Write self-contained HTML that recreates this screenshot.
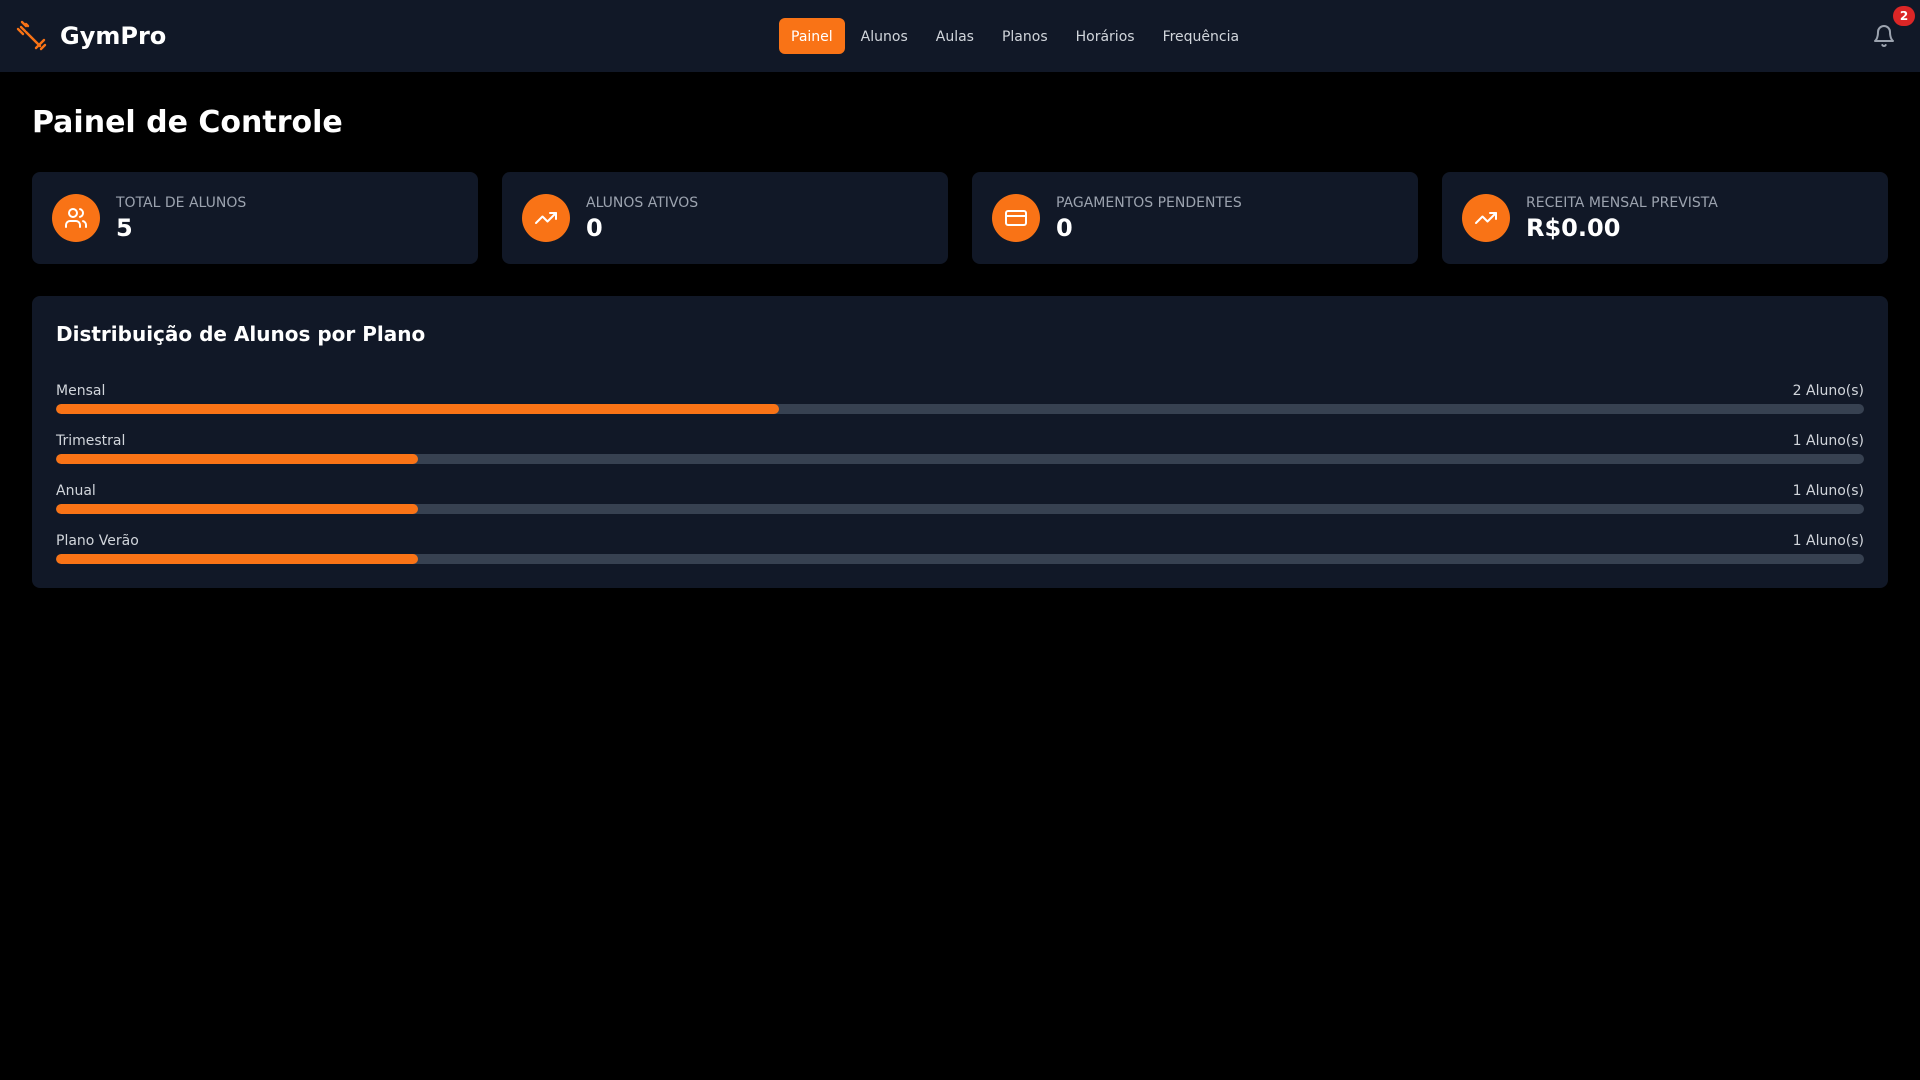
<!DOCTYPE html>
<html><head><meta charset="utf-8"><style>
*{margin:0;padding:0;box-sizing:border-box}
body{width:1920px;height:1080px;background:#000;font-family:"DejaVu Sans","Liberation Sans",sans-serif;color:#fff;position:relative;overflow:hidden}
.hdr{position:absolute;left:0;top:0;width:1920px;height:72px;background:#111827}
.logo{position:absolute;left:60px;top:18px;font-size:24px;font-weight:bold;line-height:36px}
.nav{position:absolute;left:779px;top:18px;display:flex;gap:4px}
.nav a{display:block;height:36px;line-height:38px;padding:0 12px;font-size:14px;color:#d1d5db;border-radius:6px}
.nav a.on{background:#f97316;color:#fff}
h1{position:absolute;left:32px;top:105px;font-size:30px;line-height:36px;font-weight:bold}
.cards{position:absolute;left:32px;top:172px;display:flex;gap:24px}
.card{width:446px;height:92px;background:#111827;border-radius:8px;padding:20px;display:flex;align-items:center}
.ic{width:48px;height:48px;border-radius:50%;background:#f97316;display:flex;align-items:center;justify-content:center;margin-right:16px}
.lab{font-size:14px;line-height:20px;color:#9ca3af;text-transform:uppercase;position:relative;top:1px}
.val{font-size:24px;line-height:32px;font-weight:bold}
.panel{position:absolute;left:32px;top:296px;width:1856px;height:292px;background:#111827;border-radius:8px;padding:24px}
.panel h2{font-size:20px;line-height:28px;font-weight:bold;margin-bottom:32px}
.row{margin-bottom:16px}
.rl{display:flex;justify-content:space-between;font-size:14px;line-height:20px;color:#d1d5db;margin-bottom:4px;position:relative;top:1px}
.bar{height:10px;background:#374151;border-radius:5px;overflow:hidden}
.bar div{height:10px;background:#f97316;border-radius:5px}
</style></head><body>
<div class="hdr">
<svg style="position:absolute;left:16px;top:20px" width="32" height="32" viewBox="0 0 32 32" fill="none" stroke="#f97316" stroke-width="2.4" stroke-linecap="round"><path d="M6 2l4 4M2 9l5 5M5 7l4 4M10 12l14 14M20 28l8-8M25 29l4-4M12 6l-2-2"/></svg>
<div class="logo">GymPro</div>
<div class="nav"><a class="on">Painel</a><a>Alunos</a><a>Aulas</a><a>Planos</a><a>Horários</a><a>Frequência</a></div>
<svg style="position:absolute;left:1872px;top:24px" width="24" height="24" viewBox="0 0 24 24" fill="none" stroke="#9ca3af" stroke-width="2" stroke-linecap="round" stroke-linejoin="round"><path d="M6 8a6 6 0 0 1 12 0c0 7 3 9 3 9H3s3-2 3-9"/><path d="M10.3 21a1.94 1.94 0 0 0 3.4 0"/></svg>
<div style="position:absolute;left:1893px;top:6px;width:22px;height:20px;border-radius:10px;background:#dc2626;font-size:12px;font-weight:bold;text-align:center;line-height:20px">2</div>
</div>
<h1>Painel de Controle</h1>
<div class="cards">
<div class="card"><div class="ic"><svg width="24" height="24" viewBox="0 0 24 24" fill="none" stroke="#fff" stroke-width="2" stroke-linecap="round" stroke-linejoin="round"><path d="M16 21v-2a4 4 0 0 0-4-4H6a4 4 0 0 0-4 4v2"/><circle cx="9" cy="7" r="4"/><path d="M22 21v-2a4 4 0 0 0-3-3.87M16 3.13a4 4 0 0 1 0 7.75"/></svg></div><div><div class="lab">Total de Alunos</div><div class="val">5</div></div></div>
<div class="card"><div class="ic"><svg width="24" height="24" viewBox="0 0 24 24" fill="none" stroke="#fff" stroke-width="2" stroke-linecap="round" stroke-linejoin="round"><path d="M22 7l-8.5 8.5-5-5L2 17"/><path d="M16 7h6v6"/></svg></div><div><div class="lab">Alunos Ativos</div><div class="val">0</div></div></div>
<div class="card"><div class="ic"><svg width="24" height="24" viewBox="0 0 24 24" fill="none" stroke="#fff" stroke-width="2" stroke-linecap="round" stroke-linejoin="round"><rect x="2" y="5" width="20" height="14" rx="2"/><path d="M2 10h20"/></svg></div><div><div class="lab">Pagamentos Pendentes</div><div class="val">0</div></div></div>
<div class="card"><div class="ic"><svg width="24" height="24" viewBox="0 0 24 24" fill="none" stroke="#fff" stroke-width="2" stroke-linecap="round" stroke-linejoin="round"><path d="M22 7l-8.5 8.5-5-5L2 17"/><path d="M16 7h6v6"/></svg></div><div><div class="lab">Receita Mensal Prevista</div><div class="val">R$0.00</div></div></div>
</div>
<div class="panel">
<h2>Distribuição de Alunos por Plano</h2>
<div class="row"><div class="rl"><span>Mensal</span><span>2 Aluno(s)</span></div><div class="bar"><div style="width:40%"></div></div></div>
<div class="row"><div class="rl"><span>Trimestral</span><span>1 Aluno(s)</span></div><div class="bar"><div style="width:20%"></div></div></div>
<div class="row"><div class="rl"><span>Anual</span><span>1 Aluno(s)</span></div><div class="bar"><div style="width:20%"></div></div></div>
<div class="row"><div class="rl"><span>Plano Verão</span><span>1 Aluno(s)</span></div><div class="bar"><div style="width:20%"></div></div></div>
</div>
</body></html>
